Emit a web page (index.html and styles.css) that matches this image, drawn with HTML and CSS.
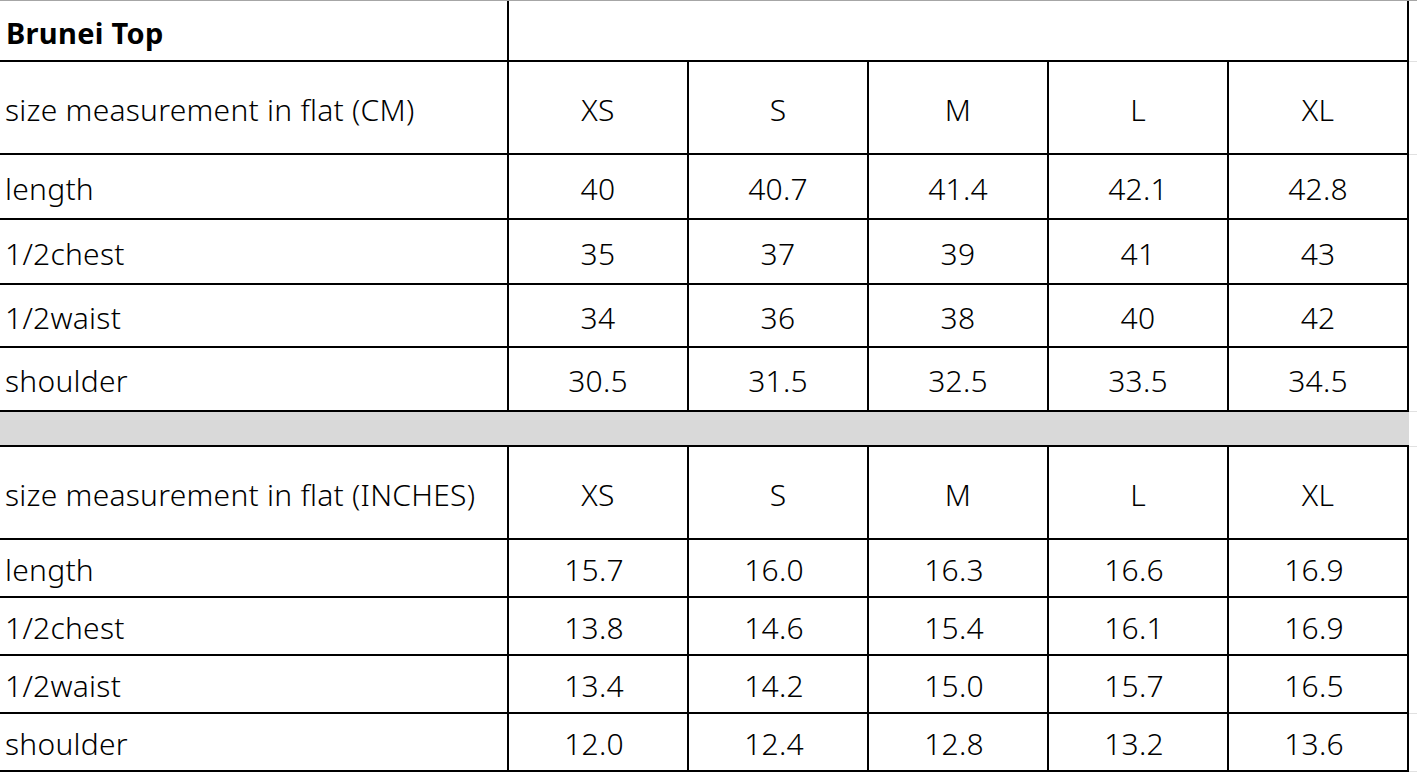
FILE: index.html
```html
<!DOCTYPE html>
<html>
<head>
<meta charset="utf-8">
<link rel="stylesheet" href="styles.css">
</head>
<body>
<div class="sheet">
<table class="grid">
  <colgroup>
    <col class="c-label"><col class="c-size"><col class="c-size"><col class="c-size"><col class="c-size"><col class="c-size"><col class="c-fill">
  </colgroup>
  <tbody>
    <tr class="r-title">
      <td class="lbl title">Brunei Top</td>
      <td colspan="5"></td>
      <td class="fill"></td>
    </tr>
    <tr class="r-head">
      <td class="lbl">size measurement in flat (CM)</td>
      <td>XS</td><td>S</td><td>M</td><td>L</td><td>XL</td>
      <td class="fill"></td>
    </tr>
    <tr class="r-cm r-a">
      <td class="lbl">length</td>
      <td>40</td><td>40.7</td><td>41.4</td><td>42.1</td><td>42.8</td>
      <td class="fill blank"></td>
    </tr>
    <tr class="r-cm r-a">
      <td class="lbl">1/2chest</td>
      <td>35</td><td>37</td><td>39</td><td>41</td><td>43</td>
      <td class="fill blank"></td>
    </tr>
    <tr class="r-cm r-b">
      <td class="lbl">1/2waist</td>
      <td>34</td><td>36</td><td>38</td><td>40</td><td>42</td>
      <td class="fill blank"></td>
    </tr>
    <tr class="r-cm r-c">
      <td class="lbl">shoulder</td>
      <td>30.5</td><td>31.5</td><td>32.5</td><td>33.5</td><td>34.5</td>
      <td class="fill"></td>
    </tr>
    <tr class="r-gap">
      <td class="gap" colspan="6"></td>
      <td class="fill"></td>
    </tr>
    <tr class="r-head2">
      <td class="lbl">size measurement in flat (INCHES)</td>
      <td>XS</td><td>S</td><td>M</td><td>L</td><td>XL</td>
      <td class="fill blank"></td>
    </tr>
    <tr class="r-in">
      <td class="lbl">length</td>
      <td class="num">15.7</td><td class="num">16.0</td><td class="num">16.3</td><td class="num">16.6</td><td class="num">16.9</td>
      <td class="fill blank"></td>
    </tr>
    <tr class="r-in">
      <td class="lbl">1/2chest</td>
      <td class="num">13.8</td><td class="num">14.6</td><td class="num">15.4</td><td class="num">16.1</td><td class="num">16.9</td>
      <td class="fill blank"></td>
    </tr>
    <tr class="r-in">
      <td class="lbl">1/2waist</td>
      <td class="num">13.4</td><td class="num">14.2</td><td class="num">15.0</td><td class="num">15.7</td><td class="num">16.5</td>
      <td class="fill"></td>
    </tr>
    <tr class="r-in">
      <td class="lbl">shoulder</td>
      <td class="num">12.0</td><td class="num">12.4</td><td class="num">12.8</td><td class="num">13.2</td><td class="num">13.6</td>
      <td class="fill"></td>
    </tr>
  </tbody>
</table>
</div>
</body>
</html>
```

FILE: styles.css
```css
html, body {
  margin: 0;
  padding: 0;
  background: #ffffff;
}

.sheet {
  width: 1417px;
  height: 773px;
  overflow: hidden;
  border-top: 1px solid #a6a6a6;
  box-sizing: border-box;
}

.grid {
  border-collapse: separate;
  border-spacing: 0;
  table-layout: fixed;
  width: 1417px;
  font-family: "Noto Sans", "Liberation Sans", sans-serif;
  font-size: 30px;
  font-weight: 300;
  letter-spacing: 0.25px;
  color: #000;
}

.c-label { width: 509px; }
.c-size { width: 180px; }
.c-fill { width: 8px; }

.grid td {
  box-sizing: border-box;
  padding: 4px 0 0 0;
  border-right: 2px solid #000;
  border-bottom: 2px solid #000;
  text-align: center;
  vertical-align: middle;
  white-space: nowrap;
  overflow: hidden;
  line-height: 1;
}

.grid td.lbl {
  text-align: left;
  padding-left: 5px;
}

.grid td.title {
  font-size: 29px;
  font-weight: 700;
  letter-spacing: 0.3px;
  padding-left: 6px;
}

.grid td.num {
  padding-right: 8px;
}

.grid td.fill {
  border-right: none;
  border-bottom: 1px solid #e1e1e1;
}

.grid td.fill.blank {
  border-bottom-color: transparent;
}

.grid td.gap {
  background: #d9d9d9;
  border-right: none;
}

.r-title td { height: 61px; }
.r-head td { height: 93px; }
.r-a td { height: 65px; }
.r-b td { height: 63px; }
.r-c td { height: 64px; }
.r-gap td { height: 35px; }
.r-head2 td { height: 93px; }
.r-in td { height: 58px; }
```
